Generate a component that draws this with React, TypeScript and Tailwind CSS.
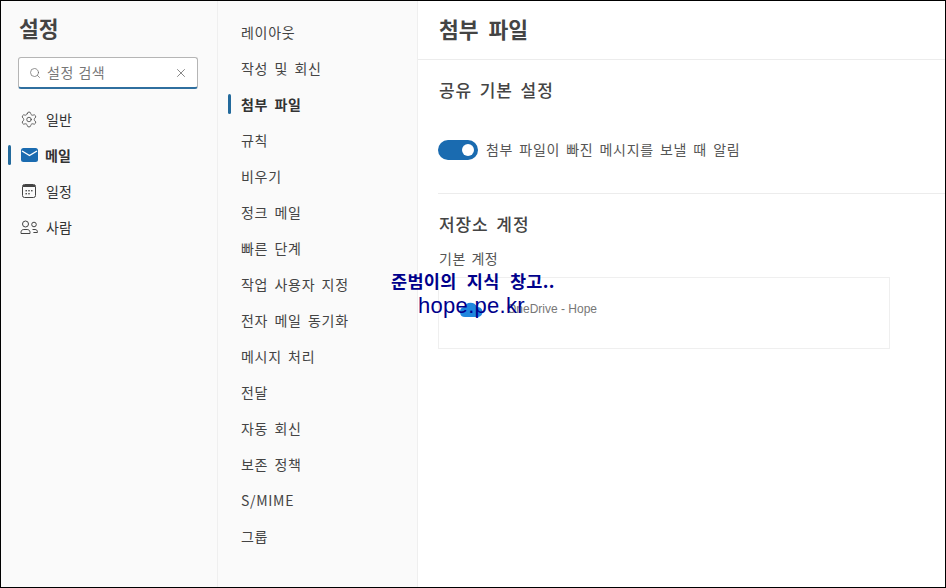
import { Search, X, Settings } from "lucide-react";

const kr = "font-['Noto_Sans_CJK_KR','Noto_Sans',sans-serif]";

const subMenu = [
  "레이아웃",
  "작성 및 회신",
  "첨부 파일",
  "규칙",
  "비우기",
  "정크 메일",
  "빠른 단계",
  "작업 사용자 지정",
  "전자 메일 동기화",
  "메시지 처리",
  "전달",
  "자동 회신",
  "보존 정책",
  "S/MIME",
  "그룹",
];

function MailIcon() {
  return (
    <svg width="17" height="14" viewBox="0 0 17 14">
      <rect x="0" y="0" width="17" height="14" rx="2.5" fill="#1a6bb0" />
      <path d="M1 3l7.5 4.5L16 3" fill="none" stroke="#fff" strokeWidth="1.4" />
    </svg>
  );
}

function CalendarIcon() {
  return (
    <svg width="14" height="14" viewBox="0 0 14 14" fill="none">
      <rect x="0.5" y="0.5" width="13" height="13" rx="2" stroke="#444" />
      <rect x="1" y="1" width="12" height="2" fill="#444" />
      <g fill="#444">
        <rect x="3.5" y="6" width="1.4" height="1.4" />
        <rect x="6.3" y="6" width="1.4" height="1.4" />
        <rect x="9.1" y="6" width="1.4" height="1.4" />
        <rect x="3.5" y="9" width="1.4" height="1.4" />
        <rect x="6.3" y="9" width="1.4" height="1.4" />
      </g>
    </svg>
  );
}

function PeopleIcon() {
  return (
    <svg width="18" height="14" viewBox="0 0 18 14" fill="none" stroke="#444" strokeWidth="1">
      <circle cx="5.5" cy="4" r="3" />
      <path d="M1 13.5v-1.2c0-1.7 1.2-2.8 2.8-2.8h3.4c1.6 0 2.8 1.1 2.8 2.8v1.2z" />
      <circle cx="14" cy="4.5" r="2.3" />
      <path d="M12.5 9.5h2.6c1.3 0 2.3.9 2.3 2.2v.8h-4" />
    </svg>
  );
}

function NavItem({ icon, label, active }: { icon: React.ReactNode; label: string; active?: boolean }) {
  return (
    <div className="relative flex h-9 items-center pl-[19px]">
      {active && <span className="absolute left-[7px] top-[8px] h-[20px] w-[3px] rounded-sm bg-[#236a9c]" />}
      <span className="flex w-[18px] justify-center">{icon}</span>
      <span className={`text-[14px] text-[#333] ${active ? "ml-[7px] font-bold" : "ml-[8px]"}`}>{label}</span>
    </div>
  );
}

export default function App() {
  return (
    <div className={`relative flex h-[588px] w-[946px] overflow-hidden border border-black bg-white ${kr}`}>
      {/* LEFT NAV */}
      <div className="w-[216px] shrink-0 bg-[#fafafa]">
        <h1 className="ml-[18px] mt-[12px] text-[21.5px] leading-[30px] font-bold text-[#444]">설정</h1>
        <div className="ml-[17px] mt-[14px] flex h-[32px] w-[180px] items-center rounded-[3px] border border-[#b5b5b5] border-b-2 border-b-[#2f6f9f] bg-white pl-[10px] pr-[9px]">
          <Search size={12} strokeWidth={1.4} className="text-[#666]" />
          <span className="ml-[6px] flex-1 text-[14px] tracking-[0.5px] [word-spacing:1px] text-[#777]">설정 검색</span>
          <X size={14} strokeWidth={1.2} className="text-[#555]" />
        </div>
        <div className="mt-[12px]">
          <NavItem icon={<Settings size={19} strokeWidth={1.1} className="text-[#444]" />} label="일반" />
          <NavItem icon={<MailIcon />} label="메일" active />
          <NavItem icon={<CalendarIcon />} label="일정" />
          <NavItem icon={<PeopleIcon />} label="사람" />
        </div>
      </div>

      {/* SUB MENU */}
      <div className="w-[201px] shrink-0 border-x border-[#efefef] bg-[#fafafa] pt-[13px]">
        {subMenu.map((item) => (
          <div key={item} className="relative flex h-9 items-center pl-[23px]">
            {item === "첨부 파일" && <span className="absolute left-[10px] top-[8px] h-[20px] w-[3px] rounded-sm bg-[#236a9c]" />}
            <span className={`text-[14px] tracking-[0.7px] [word-spacing:2.5px] ${item === "첨부 파일" ? "font-bold text-[#333]" : "text-[#444]"}`}>{item}</span>
          </div>
        ))}
      </div>

      {/* CONTENT */}
      <div className="flex-1">
        <div className="flex h-[59px] items-center border-b border-[#ececec] pl-[21px] pb-[2px]">
          <h2 className="text-[21.5px] font-bold [word-spacing:5px] text-[#444]">첨부 파일</h2>
        </div>
        <div className="pl-[21px]">
          <h3 className="mt-[16px] text-[17px] leading-[28px] font-medium tracking-[0.9px] [word-spacing:3px] text-[#444]">공유 기본 설정</h3>
          <div className="ml-[-1px] mt-[35px] flex items-center">
            <span className="flex h-[20px] w-[40px] items-center justify-end rounded-full bg-[#1a6bb0] pr-[4px]">
              <span className="h-[12px] w-[12px] rounded-full bg-white" />
            </span>
            <span className="ml-[8px] text-[14px] tracking-[0.65px] [word-spacing:2.5px] text-[#555]">첨부 파일이 빠진 메시지를 보낼 때 알림</span>
          </div>
          <div className="ml-[-1px] mt-[33px] border-t border-[#ececec]" />
          <h3 className="mt-[16px] text-[17px] leading-[28px] font-medium tracking-[0.9px] [word-spacing:3px] text-[#444]">저장소 계정</h3>
          <p className="mt-[10px] text-[14px] leading-[20px] tracking-[0.5px] [word-spacing:2px] text-[#555]">기본 계정</p>
          <div className="ml-[-1px] mt-[9px] flex h-[72px] w-[452px] items-center border border-[#efefef] pl-[20px] pb-[8px]">
            <svg width="24" height="16" viewBox="0 0 24 16" className="mt-[2px]">
              <path d="M6 15a5 5 0 0 1-1-9.9A7 7 0 0 1 18 5a5 5 0 0 1 1 10z" fill="#1f87de" />
            </svg>
            <span className="ml-[24px] font-['Liberation_Sans',sans-serif] text-[12px] text-[#777]">OneDrive - Hope</span>
          </div>
        </div>
      </div>

      {/* WATERMARK */}
      <div className="absolute left-[390px] top-[268px] flex flex-col items-start text-[#00008b]">
        <span className="text-[17.5px] leading-[24px] font-bold tracking-[0.3px] [word-spacing:6px] whitespace-nowrap">준범이의 지식 창고..</span>
        <span className="ml-[27px] font-['Liberation_Sans',sans-serif] text-[22px] leading-[26px] tracking-[0.3px]">hope.pe.kr</span>
      </div>
    </div>
  );
}
